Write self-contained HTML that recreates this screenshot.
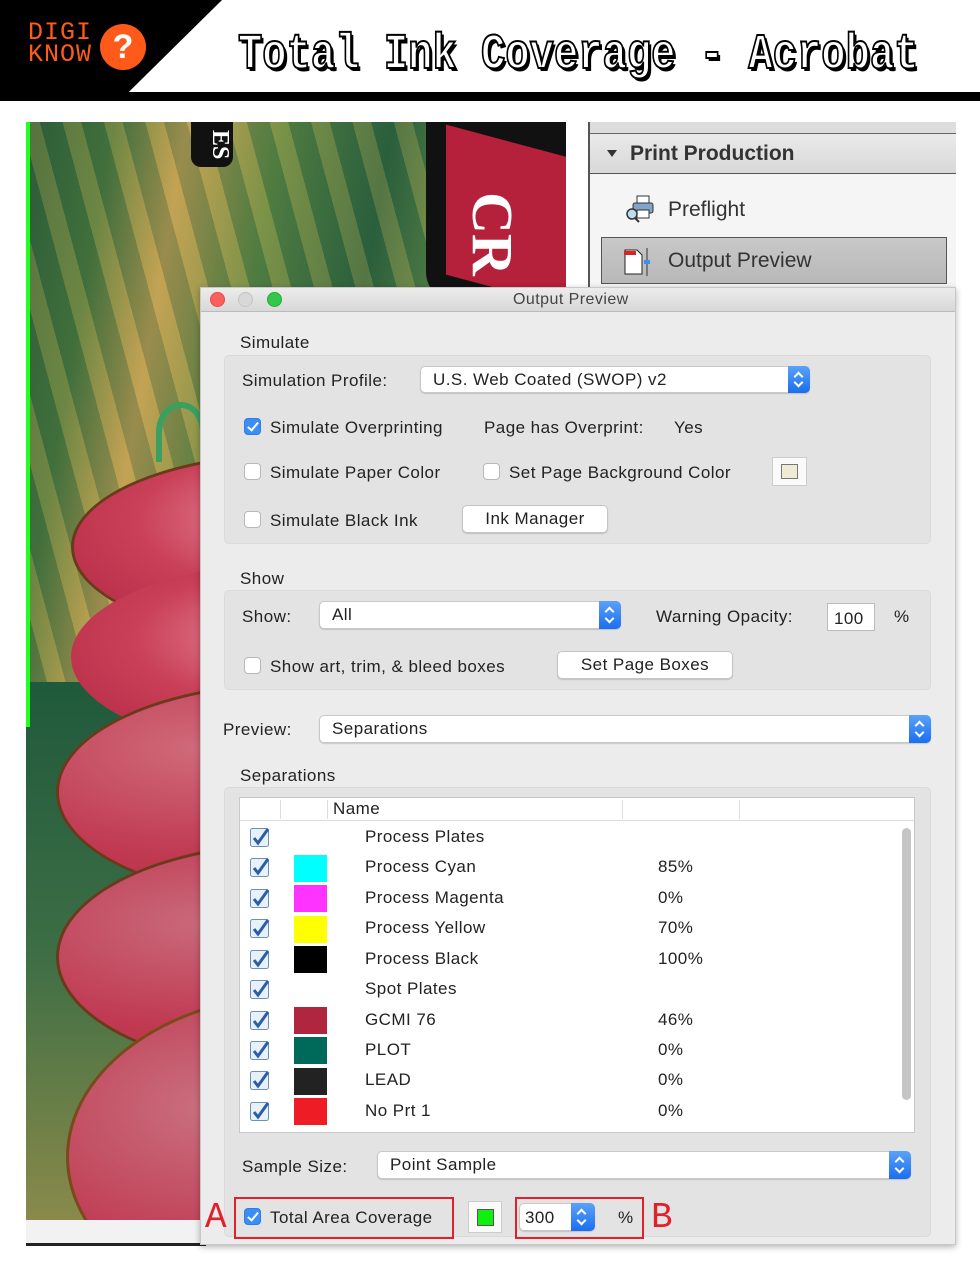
<!DOCTYPE html>
<html><head><meta charset="utf-8"><style>
*{margin:0;padding:0;box-sizing:border-box}
body{width:980px;height:1268px;background:#fff;position:relative;overflow:hidden;font-family:"Liberation Sans",Arial,sans-serif;color:#222}
.a{position:absolute}
.t{position:absolute;font-size:17px;white-space:nowrap;line-height:20px;letter-spacing:.45px}
.cb{position:absolute;width:17px;height:17px;border:1px solid #b8b8b8;border-radius:4px;background:#fff}
.cb.on{background:#3a8ef5;border-color:#2f7de0}
.cb.on:after{content:"";position:absolute;left:5px;top:1px;width:4px;height:9px;border:solid #fff;border-width:0 2px 2px 0;transform:rotate(40deg)}
.sel{position:absolute;background:#fff;border:1px solid #c8c8c8;border-radius:5px;box-shadow:0 1px 1px rgba(0,0,0,.15)}
.sel .ar{position:absolute;right:-1px;top:-1px;bottom:-1px;width:22px;background:linear-gradient(#5aa2f8,#1a6ef0);border-radius:0 5px 5px 0}
.sel .ar:before,.sel .ar:after{content:"";position:absolute;left:7px;width:5px;height:5px;border:solid #fff;border-width:2px 0 0 2px}
.sel .ar:before{top:7px;transform:rotate(45deg)}
.sel .ar:after{bottom:7px;transform:rotate(225deg)}
.btn{position:absolute;background:#fff;border:1px solid #c4c4c4;border-radius:5px;box-shadow:0 1px 1px rgba(0,0,0,.15);font-size:17px;text-align:center;line-height:25px;letter-spacing:.45px}
.grp{position:absolute;background:#e3e3e3;border-radius:5px;border:1px solid #dadada}
</style></head><body>
<div class="a" style="left:0;top:0;width:222px;height:92px;background:#000;clip-path:polygon(0 0,100% 0,58% 100%,0 100%)"></div>
<div class="a" style="left:28px;top:22px;font-family:'Liberation Mono',monospace;font-size:25px;line-height:22px;color:#ff5a1a;letter-spacing:1px">DIGI<br>KNOW</div>
<div class="a" style="left:100px;top:24px;width:46px;height:46px;border-radius:50%;background:#ff5a1a;color:#fff;font:bold 34px 'Liberation Sans';text-align:center;line-height:46px">?</div>
<div class="a" style="left:238px;top:26px;white-space:nowrap;font-family:'Liberation Mono',monospace;font-weight:bold;font-size:50px;color:#fff;-webkit-text-stroke:2px #000;text-shadow:3px 3px 0 #000;line-height:60px;transform:scaleX(0.81);transform-origin:0 0">Total Ink Coverage - Acrobat</div>
<div class="a" style="left:0;top:92px;width:980px;height:9px;background:#000"></div>

<div class="a" style="left:26px;top:122px;width:540px;height:1100px;overflow:hidden;background:linear-gradient(100deg,#2e5f3a 0%,#4d7a3f 12%,#c2a055 22%,#5f8a45 35%,#2e6440 50%,#6a8f4a 62%,#2f6a45 78%,#276040 100%)">
 <div class="a" style="left:0;top:0;width:540px;height:1100px;background:repeating-linear-gradient(75deg,rgba(200,170,80,.25) 0 18px,rgba(30,80,50,.25) 18px 40px)"></div>
 <div class="a" style="left:0;top:560px;width:140px;height:540px;background:linear-gradient(#1f5a3c,#3d6e45 50%,#8a8a4a)"></div>
 <div class="a" style="left:165px;top:0;width:42px;height:45px;background:#111;border-radius:0 0 10px 10px;color:#fff;font:bold 24px 'Liberation Serif';text-align:center;writing-mode:vertical-rl">ES</div>
 <div class="a" style="left:400px;top:0;width:140px;height:180px;background:#111;border-radius:0 0 0 30px"></div>
 <div class="a" style="left:420px;top:20px;width:130px;height:150px;background:#b5203a;transform:skewY(15deg)"></div>
 <div class="a" style="left:440px;top:70px;color:#fff;font:bold 58px 'Liberation Serif';transform:rotate(90deg);transform-origin:30px 30px">CR</div>
 <div class="a" style="left:45px;top:330px;width:460px;height:190px;border-radius:50%;background:radial-gradient(ellipse at 45% 35%,#e88a98,#c94058 40%,#b52a45 80%);border:3px solid #6b3a1a"></div>
 <div class="a" style="left:45px;top:440px;width:460px;height:190px;border-radius:50%;background:radial-gradient(ellipse at 45% 40%,#e88a98,#c94058 40%,#b52a45 80%)"></div>
 <div class="a" style="left:30px;top:560px;width:480px;height:220px;border-radius:50%;background:radial-gradient(ellipse at 30% 30%,#d06a7a,#c03a52 50%,#b5283f);border:3px solid #6b3a1a"></div>
 <div class="a" style="left:30px;top:720px;width:480px;height:230px;border-radius:50%;background:radial-gradient(ellipse at 30% 35%,#c9697a,#c03a52 50%,#b5283f);border:3px solid #6b3a1a"></div>
 <div class="a" style="left:40px;top:870px;width:480px;height:330px;border-radius:50%;background:radial-gradient(ellipse at 30% 35%,#c9707f,#c03a52 50%,#b5283f);border:3px solid #7a4a1a"></div>
 <div class="a" style="left:130px;top:280px;width:50px;height:60px;border:6px solid #3aa060;border-radius:50% 50% 0 0;border-bottom:none"></div>
</div>
<div class="a" style="left:26px;top:122px;width:4px;height:605px;background:#2f2;"></div>
<div class="a" style="left:26px;top:1220px;width:180px;height:25px;background:#f2f2f2"></div>
<div class="a" style="left:26px;top:1243px;width:180px;height:3px;background:#222"></div>

<div class="a" style="left:588px;top:122px;width:368px;height:170px;background:#f5f5f5;border-left:2px solid #555"></div>
<div class="a" style="left:590px;top:122px;width:366px;height:12px;background:#ddd;border-bottom:1px solid #666"></div>
<div class="a" style="left:590px;top:134px;width:366px;height:40px;background:linear-gradient(#eaeaea,#d8d8d8);border-bottom:1px solid #555"></div>
<div class="a" style="left:607px;top:150px;width:0;height:0;border-left:5px solid transparent;border-right:5px solid transparent;border-top:7px solid #333"></div>
<div class="t" style="left:630px;top:142px;font-size:21px;font-weight:bold;color:#333;line-height:24px;letter-spacing:0">Print Production</div>
<div class="a" style="left:625px;top:194px;width:30px;height:30px"><svg width="32" height="32"><rect x="12" y="2" width="12" height="8" fill="#fff" stroke="#333"/><rect x="8" y="9" width="20" height="10" rx="2" fill="#7fa6c9" stroke="#333"/><rect x="12" y="16" width="12" height="8" fill="#fff" stroke="#333"/><circle cx="7" cy="20" r="5" fill="#bde" stroke="#333" stroke-width="1.5"/><line x1="10" y1="24" x2="14" y2="28" stroke="#333" stroke-width="2"/></svg></div>
<div class="t" style="left:668px;top:198px;font-size:21px;color:#333;line-height:24px;letter-spacing:0">Preflight</div>
<div class="a" style="left:601px;top:237px;width:346px;height:47px;background:linear-gradient(#c8c8c8,#b8b8b8);border:1px solid #555"></div>
<div class="a" style="left:623px;top:248px;width:30px;height:28px"><svg width="30" height="28"><path d="M2 2h12l5 5v19H2z" fill="#fff" stroke="#222"/><rect x="1" y="3" width="12" height="4" fill="#d22"/><line x1="24" y1="0" x2="24" y2="28" stroke="#333"/><rect x="21" y="12" width="6" height="4" fill="#3a8ef5"/></svg></div>
<div class="t" style="left:668px;top:249px;font-size:21px;color:#333;line-height:24px;letter-spacing:0">Output Preview</div>

<div class="a" style="left:200px;top:287px;width:756px;height:958px;background:#ececec;border:1px solid #c8c8c8;box-shadow:0 2px 6px rgba(0,0,0,.3)"></div>
<div class="a" style="left:201px;top:288px;width:754px;height:24px;background:linear-gradient(#ececec,#d8d8d8);border-bottom:1px solid #bbb"></div>
<div class="a" style="left:210px;top:292px;width:15px;height:15px;border-radius:50%;background:#fc605c;border:1px solid #de4b47"></div>
<div class="a" style="left:238px;top:292px;width:15px;height:15px;border-radius:50%;background:#d8d8d8;border:1px solid #c4c4c4"></div>
<div class="a" style="left:267px;top:292px;width:15px;height:15px;border-radius:50%;background:#34c84a;border:1px solid #27a83a"></div>
<div class="t" style="left:513px;top:290px;font-size:16px;color:#444">Output Preview</div>

<div class="t" style="left:240px;top:333px">Simulate</div>
<div class="grp" style="left:224px;top:355px;width:707px;height:189px"></div>
<div class="t" style="left:242px;top:371px">Simulation Profile:</div>
<div class="sel" style="left:420px;top:366px;width:390px;height:27px"><span class="t" style="left:12px;top:3px">U.S. Web Coated (SWOP) v2</span><div class="ar"></div></div>
<div class="cb on" style="left:244px;top:418px"></div>
<div class="t" style="left:270px;top:418px">Simulate Overprinting</div>
<div class="t" style="left:484px;top:418px">Page has Overprint:</div>
<div class="t" style="left:674px;top:418px">Yes</div>
<div class="cb" style="left:244px;top:463px"></div>
<div class="t" style="left:270px;top:463px">Simulate Paper Color</div>
<div class="cb" style="left:483px;top:463px"></div>
<div class="t" style="left:509px;top:463px">Set Page Background Color</div>
<div class="a" style="left:772px;top:457px;width:35px;height:29px;background:#fafafa;border:1px solid #ccc"><div class="a" style="left:8px;top:6px;width:17px;height:15px;background:#efecd5;border:1px solid #777"></div></div>
<div class="cb" style="left:244px;top:511px"></div>
<div class="t" style="left:270px;top:511px">Simulate Black Ink</div>
<div class="btn" style="left:462px;top:505px;width:146px;height:28px">Ink Manager</div>

<div class="t" style="left:240px;top:569px">Show</div>
<div class="grp" style="left:224px;top:590px;width:707px;height:100px"></div>
<div class="t" style="left:242px;top:607px">Show:</div>
<div class="sel" style="left:319px;top:601px;width:302px;height:28px"><span class="t" style="left:12px;top:3px">All</span><div class="ar"></div></div>
<div class="t" style="left:656px;top:607px">Warning Opacity:</div>
<div class="a" style="left:827px;top:603px;width:48px;height:28px;background:#fff;border:1px solid #bbb"><span class="t" style="left:6px;top:5px">100</span></div>
<div class="t" style="left:894px;top:607px">%</div>
<div class="cb" style="left:244px;top:657px"></div>
<div class="t" style="left:270px;top:657px">Show art, trim, &amp; bleed boxes</div>
<div class="btn" style="left:557px;top:651px;width:176px;height:28px">Set Page Boxes</div>

<div class="t" style="left:223px;top:720px">Preview:</div>
<div class="sel" style="left:319px;top:715px;width:612px;height:28px"><span class="t" style="left:12px;top:3px">Separations</span><div class="ar"></div></div>

<div class="t" style="left:240px;top:766px">Separations</div>
<div class="grp" style="left:224px;top:787px;width:707px;height:450px"></div>
<div class="a" style="left:239px;top:797px;width:676px;height:336px;background:#fff;border:1px solid #c8c8c8"></div>
<div class="a" style="left:240px;top:798px;width:674px;height:23px;border-bottom:1px solid #ddd"></div>
<div class="a" style="left:280px;top:800px;width:1px;height:19px;background:#ddd"></div>
<div class="a" style="left:327px;top:800px;width:1px;height:19px;background:#ddd"></div>
<div class="a" style="left:622px;top:800px;width:1px;height:19px;background:#ddd"></div>
<div class="a" style="left:739px;top:800px;width:1px;height:19px;background:#ddd"></div>
<div class="t" style="left:333px;top:799px">Name</div>
<div class="a" style="left:902px;top:828px;width:9px;height:272px;background:#c4c4c4;border-radius:5px"></div>

<svg class="a" style="left:0;top:0" width="980" height="1268">
<defs><g id="ck"><rect x="0.5" y="0.5" width="18" height="18" rx="2" fill="#e8f0fa" stroke="#6a8fb8"/><path d="M4 10l4 5 10-14" fill="none" stroke="#2a5fa8" stroke-width="3"/></g></defs>
<use href="#ck" x="250" y="828"/><use href="#ck" x="250" y="858"/><use href="#ck" x="250" y="889"/><use href="#ck" x="250" y="919"/><use href="#ck" x="250" y="950"/><use href="#ck" x="250" y="980"/><use href="#ck" x="250" y="1011"/><use href="#ck" x="250" y="1041"/><use href="#ck" x="250" y="1071"/><use href="#ck" x="250" y="1102"/>
<rect x="294" y="855" width="33" height="27" fill="#00ffff"/>
<rect x="294" y="885" width="33" height="27" fill="#ff33ff"/>
<rect x="294" y="916" width="33" height="27" fill="#ffff00"/>
<rect x="294" y="946" width="33" height="27" fill="#000"/>
<rect x="294" y="1007" width="33" height="27" fill="#b0263e"/>
<rect x="294" y="1037" width="33" height="27" fill="#006a5a"/>
<rect x="294" y="1068" width="33" height="27" fill="#222"/>
<rect x="294" y="1098" width="33" height="27" fill="#ee1c24"/>
</svg>
<div class="t" style="left:365px;top:827px">Process Plates</div>
<div class="t" style="left:365px;top:857px">Process Cyan</div><div class="t" style="left:658px;top:857px">85%</div>
<div class="t" style="left:365px;top:888px">Process Magenta</div><div class="t" style="left:658px;top:888px">0%</div>
<div class="t" style="left:365px;top:918px">Process Yellow</div><div class="t" style="left:658px;top:918px">70%</div>
<div class="t" style="left:365px;top:949px">Process Black</div><div class="t" style="left:658px;top:949px">100%</div>
<div class="t" style="left:365px;top:979px">Spot Plates</div>
<div class="t" style="left:365px;top:1010px">GCMI 76</div><div class="t" style="left:658px;top:1010px">46%</div>
<div class="t" style="left:365px;top:1040px">PLOT</div><div class="t" style="left:658px;top:1040px">0%</div>
<div class="t" style="left:365px;top:1070px">LEAD</div><div class="t" style="left:658px;top:1070px">0%</div>
<div class="t" style="left:365px;top:1101px">No Prt 1</div><div class="t" style="left:658px;top:1101px">0%</div>

<div class="t" style="left:242px;top:1157px">Sample Size:</div>
<div class="sel" style="left:377px;top:1151px;width:534px;height:28px"><span class="t" style="left:12px;top:3px">Point Sample</span><div class="ar"></div></div>

<div class="a" style="left:234px;top:1197px;width:220px;height:42px;border:2px solid #e0202a"></div>
<div class="t" style="left:205px;top:1198px;font-size:36px;line-height:40px;color:#e0202a;font-family:'Liberation Mono',monospace;letter-spacing:0">A</div>
<div class="cb on" style="left:244px;top:1208px"></div>
<div class="t" style="left:270px;top:1208px">Total Area Coverage</div>
<div class="a" style="left:468px;top:1201px;width:34px;height:32px;background:#fafafa;border:1px solid #ccc"><div class="a" style="left:8px;top:7px;width:17px;height:17px;background:#11ee11;border:1px solid #555"></div></div>
<div class="a" style="left:515px;top:1197px;width:129px;height:42px;border:2px solid #e0202a"></div>
<div class="sel" style="left:519px;top:1203px;width:76px;height:28px"><span class="t" style="left:5px;top:4px">300</span><div class="ar" style="width:24px"></div></div>
<div class="t" style="left:618px;top:1208px">%</div>
<div class="t" style="left:651px;top:1198px;font-size:36px;line-height:40px;color:#e0202a;font-family:'Liberation Mono',monospace;letter-spacing:0">B</div>
</body></html>
